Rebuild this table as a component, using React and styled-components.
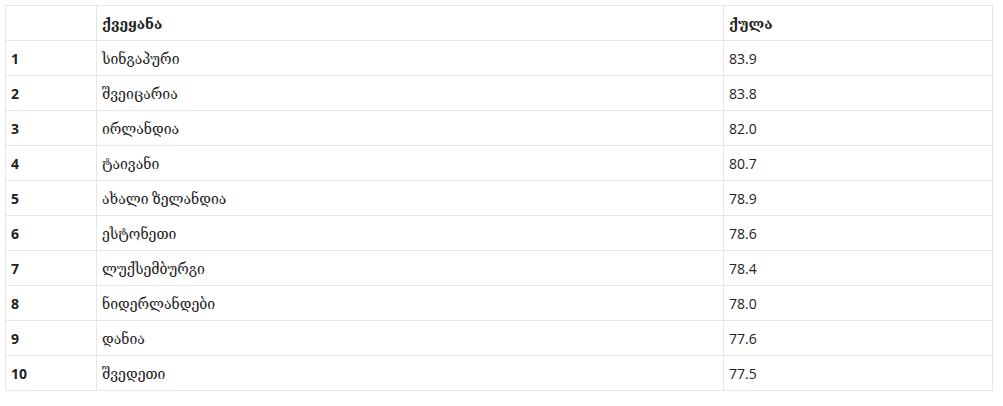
import React from "react";
import styled, { createGlobalStyle } from "styled-components";

const Global = createGlobalStyle`
  body {
    margin: 0;
    padding: 5px;
    background: #fff;
    font-family: "Open Sans", "DejaVu Serif", serif;
    color: #222;
  }
`;

const Table = styled.table`
  width: 988px;
  border-collapse: collapse;
  table-layout: fixed;
  font-size: 14px;
`;

const Cell = styled.td`
  border: 1px solid #e6e6e6;
  height: 35px;
  padding: 0 5px;
  box-sizing: border-box;
  vertical-align: middle;
  text-align: left;
  font-weight: ${(p) => (p.$bold ? 700 : 400)};
  width: ${(p) => p.$w || "auto"};
`;

const rows = [
  ["1", "სინგაპური", "83.9"],
  ["2", "შვეიცარია", "83.8"],
  ["3", "ირლანდია", "82.0"],
  ["4", "ტაივანი", "80.7"],
  ["5", "ახალი ზელანდია", "78.9"],
  ["6", "ესტონეთი", "78.6"],
  ["7", "ლუქსემბურგი", "78.4"],
  ["8", "ნიდერლანდები", "78.0"],
  ["9", "დანია", "77.6"],
  ["10", "შვედეთი", "77.5"],
];

export default function App() {
  return (
    <>
      <Global />
      <Table>
        <thead>
          <tr>
            <Cell as="th" $w="91px" />
            <Cell as="th" $bold $w="627px">
              ქვეყანა
            </Cell>
            <Cell as="th" $bold>
              ქულა
            </Cell>
          </tr>
        </thead>
        <tbody>
          {rows.map(([n, c, s]) => (
            <tr key={n}>
              <Cell $bold>{n}</Cell>
              <Cell>{c}</Cell>
              <Cell>{s}</Cell>
            </tr>
          ))}
        </tbody>
      </Table>
    </>
  );
}
